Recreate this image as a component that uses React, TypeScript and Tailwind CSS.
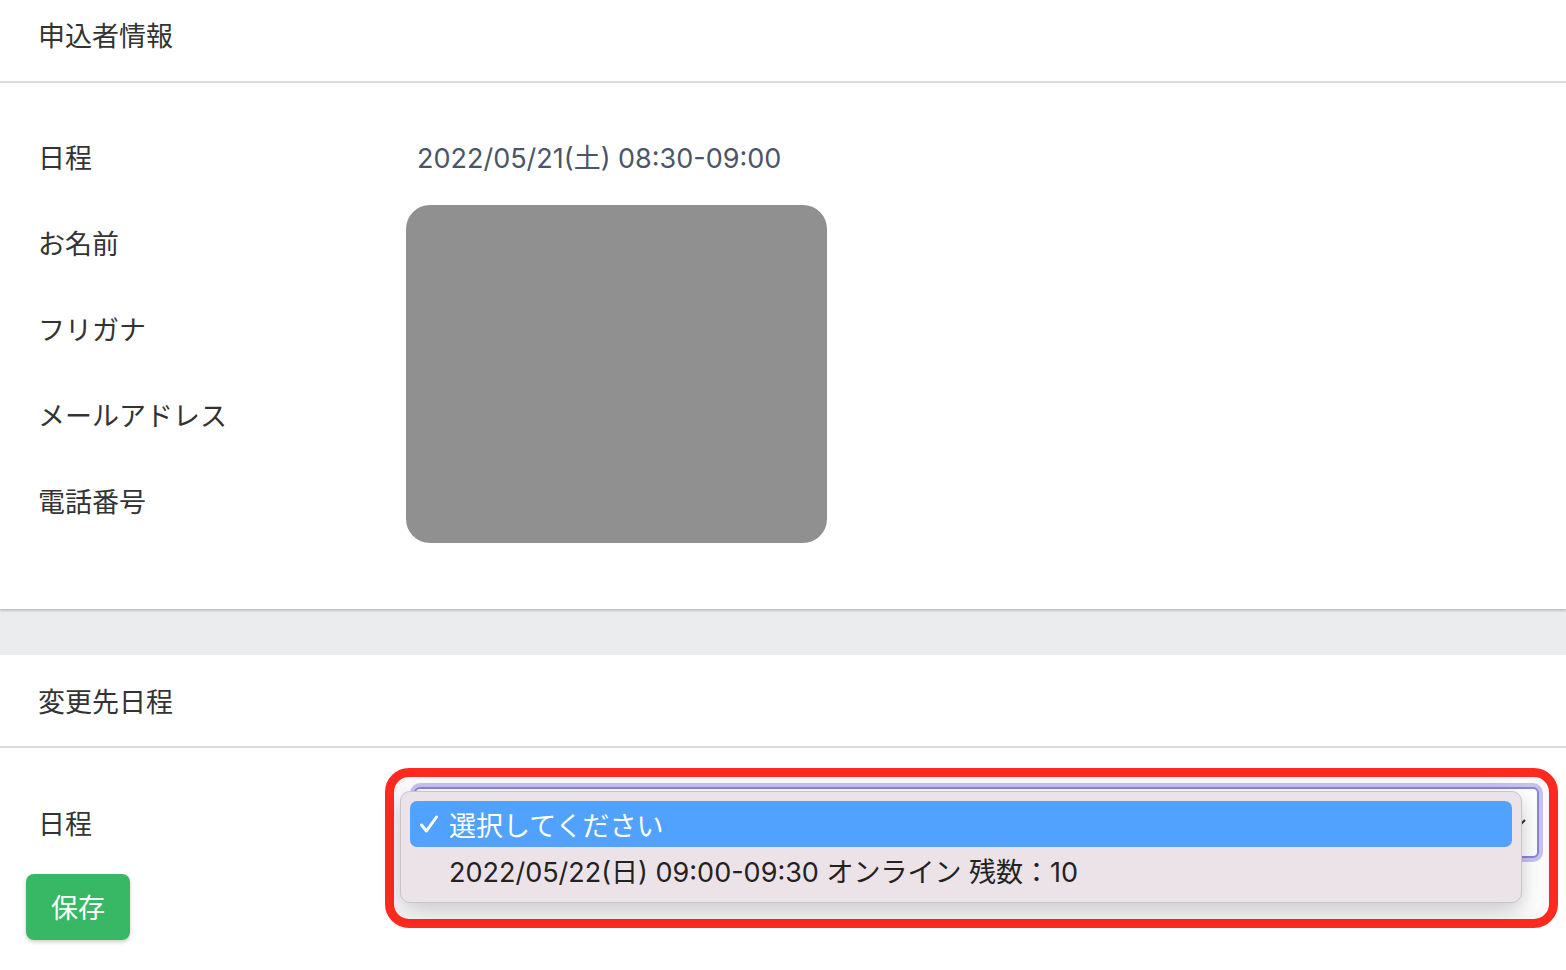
const font = {
  fontFamily: 'Inter, "Noto Sans CJK JP", "Noto Sans", sans-serif',
};

const rows = ["日程", "お名前", "フリガナ", "メールアドレス", "電話番号"];

function ApplicantCard() {
  return (
    <section className="bg-white shadow-[0_2px_2px_rgba(0,0,0,0.18)]">
      <div className="flex h-[81px] items-center pb-[6px] pl-[38px] text-[27px] text-[#333]">
        申込者情報
      </div>
      <div className="h-[2px] bg-[#d8dce0]" />
      <div className="grid grid-cols-[368px_1fr] pb-[63px] pl-[38px] pt-[33px] text-[27px] text-[#333]">
        <div className="flex h-[86px] items-center">{rows[0]}</div>
        <div className="flex h-[86px] items-center pl-[11px] text-[#4b5568]">
          2022/05/21(土) 08:30-09:00
        </div>
        {rows.slice(1).map((label, i) => (
          <div key={label} className="flex h-[86px] items-center" style={{ gridRow: i + 2 }}>
            {label}
          </div>
        ))}
        <div className="col-start-2 row-span-4 row-start-2">
          <div className="mt-[3px] h-[338px] w-[421px] rounded-[24px] bg-[#909090]" />
        </div>
      </div>
    </section>
  );
}

function ScheduleCard() {
  return (
    <section className="flex-1 bg-white">
      <div className="flex h-[91px] items-center pl-[38px] pt-[6px] text-[27px] text-[#333]">
        変更先日程
      </div>
      <div className="h-[2px] bg-[#d8dce0]" />
      <div className="pt-[39px]">
        <div className="relative flex items-center">
          <div className="w-[414px] pl-[38px] pt-[6px] text-[27px] text-[#333]">日程</div>
          <div className="relative h-[71px] w-[1125px] rounded-[6px] border-2 border-[#8a84df] bg-white ring-4 ring-[#c9c4f0]">
            <svg
              className="absolute right-[8px] top-1/2 -translate-y-1/2"
              width="20"
              height="20"
              viewBox="0 0 20 20"
              fill="none"
              stroke="#333"
              strokeWidth="2"
            >
              <path d="M4 7l6 6 6-6" />
            </svg>
          </div>

          {/* annotation frame */}
          <div className="pointer-events-none absolute left-[385px] top-[-19px] h-[160px] w-[1173px] rounded-[24px] border-[9px] border-[#ff2a1f] shadow-[inset_0_0_18px_rgba(0,0,0,0.06)]" />

          {/* open dropdown */}
          <div className="absolute left-[400px] top-[4px] w-[1122px] rounded-[10px] border border-[#c9c4c7] bg-[#ebe3e7] p-[9px] text-[27px] shadow-[0_8px_22px_rgba(0,0,0,0.22)]">
            <div className="flex h-[46px] items-center rounded-[7px] bg-[#51a2fe] pl-[9px] text-white">
              <svg
                className="mr-[10px]"
                width="20"
                height="20"
                viewBox="0 0 20 20"
                fill="none"
                stroke="#fff"
                strokeWidth="3"
                strokeLinecap="round"
                strokeLinejoin="round"
              >
                <path d="M2.5 11l5 6L17.5 3" />
              </svg>
              <span className="pt-[6px]">選択してください</span>
            </div>
            <div className="flex h-[46px] items-center pl-[39px] pt-[6px] text-[#222]">
              2022/05/22(日) 09:00-09:30 オンライン 残数：10
            </div>
          </div>
        </div>
        <div className="pl-[26px] pt-[16px]">
          <button className="h-[66px] w-[104px] rounded-[8px] bg-[#38b764] pt-[4px] text-[27px] text-white shadow-[0_2px_4px_rgba(0,0,0,0.2)]">
            保存
          </button>
        </div>
      </div>
    </section>
  );
}

export default function App() {
  return (
    <div className="flex h-[970px] w-[1566px] flex-col overflow-hidden bg-[#ebecee]" style={font}>
      <ApplicantCard />
      <div className="h-[46px] shrink-0" />
      <ScheduleCard />
    </div>
  );
}
